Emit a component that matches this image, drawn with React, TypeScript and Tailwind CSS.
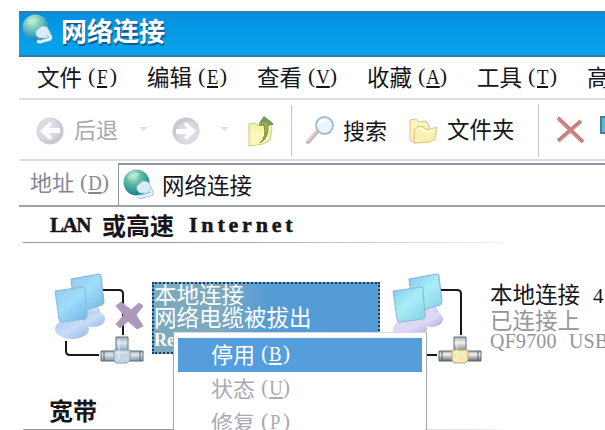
import React from 'react';

const menuItems = [
  { label: '文件', hotkey: 'F' },
  { label: '编辑', hotkey: 'E' },
  { label: '查看', hotkey: 'V' },
  { label: '收藏', hotkey: 'A' },
  { label: '工具', hotkey: 'T' },
];

const contextItems = [
  { label: '停用', hotkey: 'B', active: true },
  { label: '状态', hotkey: 'U', active: false },
  { label: '修复', hotkey: 'P', active: false },
];

const Hotkey: React.FC<{ char: string }> = ({ char }) => (
  <span className="ml-[6px] inline-flex h-[24px] font-['Liberation_Serif',serif] text-[22px] leading-[24px]">
    <span className="w-[9px]">(</span>
    <span className="flex w-[11px] justify-center">
      <span className="inline-block h-[24px] scale-x-[.85] border-b-2 border-current leading-[25px]">{char}</span>
    </span>
    <span className="w-[9px] text-right">)</span>
  </span>
);

const Globe: React.FC<{ id: string; pale?: boolean }> = ({ id, pale }) => (
  <svg width="32" height="32" viewBox="0 0 32 32" className="shrink-0">
    <defs>
      <radialGradient id={id} cx="38%" cy="25%" r="75%">
        <stop offset="0" stopColor="#c5efd9" />
        <stop offset=".4" stopColor={pale ? '#7cc9c0' : '#62bba8'} />
        <stop offset="1" stopColor={pale ? '#1783bf' : '#16818c'} />
      </radialGradient>
    </defs>
    <circle cx="13.500" cy="13.500" r="13" fill={`url(#${id})`} />
    <path d="M5 7q6-6 12-2l-5 4-6 2z" fill="#b8ecd0" opacity=".55" />
    <path d="M14 17l6-5 5 1 4 7-3 4-9 0-3-3z" fill="#d9edf6" stroke="#a4cddb" strokeWidth=".7" />
    <path d="M26 20q4 3 2 5l-10 3-3-1" fill="none" stroke="#81aec4" strokeWidth="4" />
    <path d="M26 20q4 3 2 5l-10 3-3-1" fill="none" stroke="#e5f3fa" strokeWidth="2.600" />
  </svg>
);

const Arrow: React.FC<{ id: string; forward?: boolean }> = ({ id, forward }) => (
  <svg width="28" height="28" viewBox="0 0 28 28" className={`shrink-0 ${forward ? 'rotate-180' : ''}`}>
    <defs>
      <radialGradient id={id} cx="40%" cy="40%">
        <stop offset="0" stopColor="#e2e2e9" />
        <stop offset=".8" stopColor="#d8d8e1" />
        <stop offset="1" stopColor="#c8c9d2" />
      </radialGradient>
    </defs>
    <circle cx="14" cy="14" r="13.500" fill={`url(#${id})`} />
    <path d="M4 14l10-9 2 2-3 4h11v5H13l3 5-2 2z" fill="#fff" />
  </svg>
);

const Caret: React.FC = () => (
  <svg width="9" height="4" viewBox="0 0 9 4" className="mb-[4px]">
    <path d="M0 0h9L4.500 4z" fill="#dcdce2" />
  </svg>
);

const Connection: React.FC<{ id: string; unplugged?: boolean }> = ({ id, unplugged }) => (
  <svg width="90" height="94" viewBox="0 0 90 94" className="shrink-0">
    <defs>
      <linearGradient id={`${id}-screen`} x1="0" y1="0" x2=".8" y2="1">
        <stop offset="0" stopColor={unplugged ? '#91c9ee' : '#82c6e8'} />
        <stop offset=".5" stopColor={unplugged ? '#a1dcfa' : '#a9edf8'} />
        <stop offset="1" stopColor={unplugged ? '#77bce8' : '#8ad4e8'} />
      </linearGradient>
      <linearGradient id={`${id}-base`} x1="0" y1="0" x2="1" y2="1">
        <stop offset="0" stopColor={unplugged ? '#a7c7f0' : '#d7d4f3'} />
        <stop offset=".5" stopColor={unplugged ? '#c9ddf8' : '#dedaf5'} />
        <stop offset="1" stopColor={unplugged ? '#94b6e6' : '#aaa7d8'} />
      </linearGradient>
      <linearGradient id={`${id}-plug`} x1="0" y1="0" x2="0" y2="1">
        <stop offset="0" stopColor={unplugged ? '#9aabb5' : '#a9a9a9'} />
        <stop offset=".35" stopColor={unplugged ? '#dce8ee' : '#f1f1f1'} />
        <stop offset="1" stopColor={unplugged ? '#7e95a4' : '#686868'} />
      </linearGradient>
    </defs>
    {/* cables */}
    <path d="M49 18h16q4 0 4 4v41M12 69v10q0 4 4 4h29" fill="none" stroke="#181818" strokeWidth="2" />
    {/* back monitor */}
    <path d="M31 31h12l5 14-17 2z" fill={`url(#${id}-base)`} />
    <ellipse cx="39" cy="47" rx="12" ry="8" fill={`url(#${id}-base)`} />
    <path d="M17 7L45 2q2 0 2 2l3 26q0 2-2 3l-27 8z" fill={`url(#${id}-screen)`} stroke="#86afd5" />
    {/* front monitor */}
    <path d="M12 47l13-2 7 13H5z" fill={`url(#${id}-base)`} />
    <ellipse cx="18" cy="57" rx="17" ry="10" fill={`url(#${id}-base)`} />
    <path d="M1 19l28-4q2 0 2 2l2 27q0 2-2 3L7 50q-2 0-2-3z" fill={`url(#${id}-screen)`} stroke="#8bb6d3" />
    {/* T connector */}
    <path d="M62 65h12v16H62z" fill={`url(#${id}-plug)`} stroke="#62737d" />
    <path d="M47 79h42v10H47z" fill={`url(#${id}-plug)`} stroke="#5d6d77" />
    <path d="M50 79v10M86 79v10" stroke="#52636d" />
    <path d="M60 78h16v10l-3 3H62l-2-3z" fill={unplugged ? '#c4d8e3' : '#f8e8ad'} stroke={unplugged ? '#859eae' : '#b7a779'} />
    <path d="M65 67v20M61 81h12" stroke="#fff" strokeWidth="1.500" opacity=".4" />
    {unplugged && (
      <path d="M62 34l5-4 10 8 8-7 4 3-7 9 7 11-6 3-9-8-8 7-4-4 8-9z" fill="#ae98bb" stroke="#ae9bba" />
    )}
  </svg>
);

const Toolbar: React.FC = () => (
  <div className="flex h-[61px] items-center overflow-hidden border-b-2 border-[#dcdde2] pt-[3px] whitespace-nowrap">
    <div className="ml-[17px] flex w-[136px] shrink-0 items-center text-[#a7a7ae]">
      <Arrow id="back" />
      <span className="-mt-[6px] ml-[10px] w-[65px] text-[22px]">后退</span>
      <Caret />
    </div>
    <div className="flex w-[75px] shrink-0 items-center gap-[20px]">
      <Arrow id="forward" forward />
      <Caret />
    </div>
    {/* up one level */}
    <svg width="27" height="32" viewBox="0 0 27 32" className="ml-px shrink-0">
      <path d="M1 9l6-1 3 3 11-2 3 4-2 12-7 4-14 2z" fill="#f9f3ad" stroke="#cfc580" />
      <path d="M2 15l11 2 9-6-2 14-7 4-10 1z" fill="#fdf7b8" />
      <path d="M12 28q7-6 4-18h-5l5-8 9 7-5 1q1 13-8 18z" fill="#9bb34a" stroke="#718b4a" />
      <path d="M11 8l5-7 10 8-4 1-4-3z" fill="#77995c" />
    </svg>
    <div className="ml-[16px] -mt-[2px] h-[51px] w-px shrink-0 bg-[#c3c4c9]" />
    <svg width="30" height="30" viewBox="0 0 30 30" className="-mt-[3px] ml-[13px] shrink-0">
      <path d="M3 27l11-12" stroke="#cdb5b8" strokeWidth="4" strokeLinecap="round" />
      <path d="M3 26l10-11" stroke="#e5cccd" strokeWidth="1.500" />
      <circle cx="19.500" cy="10.500" r="8.500" fill="#e6f8fe" stroke="#a4bad0" strokeWidth="1.800" />
      <path d="M14 9q2-5 8-3" fill="none" stroke="#fff" strokeWidth="2" />
    </svg>
    <span className="-mt-[4px] ml-[8px] w-[66px] shrink-0 text-[22px]">搜索</span>
    <svg width="29" height="27" viewBox="0 0 29 27" className="shrink-0">
      <path d="M1 2l6-1 3 3 7-1 3 5v14L6 25l-5-3z" fill="#fff4bc" stroke="#d6c18f" />
      <path d="M5 25V12l5-4 4 1 4 3 10-3-2 12-5 3z" fill="#fcefb0" stroke="#d6c184" />
      <path d="M7 13l4-3 6 4 8-2" fill="none" stroke="#fffbd9" strokeWidth="2" />
    </svg>
    <span className="-mt-[4px] ml-[9px] w-[91px] shrink-0 text-[22.500px]">文件夹</span>
    <div className="-mt-[2px] h-[53px] w-px shrink-0 bg-[#c3c4c9]" />
    <svg width="29" height="28" viewBox="0 0 29 28" className="-mt-[2px] ml-[17px] shrink-0">
      <path d="M2 2l25 24M25 5L2 25" stroke="#d98583" strokeWidth="4" />
      <path d="M2 1l12 11 13 14M25 5L13 14 2 24" fill="none" stroke="#9e7779" />
    </svg>
    <div className="mb-[12px] ml-[15px] h-[18px] w-[12px] shrink-0 border-2 border-[#447e9d] bg-[#5fb7d5]" />
  </div>
);

const App: React.FC = () => {
  return (
    <div className="relative h-[430px] w-[605px] overflow-hidden bg-white pl-[19px] pt-[11px] font-['Noto_Sans_CJK_SC',sans-serif] text-[#15151b]">
      {/* Title bar */}
      <div className="flex h-[46px] border-y-2 border-t-[#337caf] border-b-[#3579a3] bg-linear-to-b from-[#0790e3] to-[#06a5eb] pl-[3px] pt-px">
        <Globe id="title-globe" pale />
        <span className="ml-[7px] text-[26px] leading-[31px] font-bold text-white [text-shadow:1px_2px_1px_#16558c]">网络连接</span>
      </div>

      {/* Menu bar */}
      <div className="flex h-[43px] items-center overflow-hidden border-b-2 border-[#dedee2] pb-[4px] pl-[18px] text-[22.500px] leading-[32px] whitespace-nowrap">
        {menuItems.map((item) => (
          <div key={item.label} className="flex w-[110px] shrink-0 items-center">
            {item.label}
            <Hotkey char={item.hotkey} />
          </div>
        ))}
        <span>高</span>
      </div>

      <Toolbar />

      {/* Address bar */}
      <div className="flex h-[46px] border-b-2 border-[#9da3ad] pt-[2px]">
        <div className="flex w-[99px] items-center pb-[5px] pl-[11px] text-[22px] text-[#85878f]">
          地址
          <Hotkey char="D" />
        </div>
        <div className="flex flex-1 items-center border-t-2 border-l border-[#8e96a1] pl-[4px] text-[22.500px]">
          <Globe id="address-globe" />
          <span className="-mt-[3px] ml-[7px] leading-[30px]">网络连接</span>
        </div>
      </div>

      {/* LAN section */}
      <div className="flex h-[35px] items-center pl-[31px] text-[24px] leading-[34px] font-bold whitespace-nowrap">
        <span className="w-[52px] font-['Liberation_Serif',serif] text-[21px] tracking-[-1.500px] [-webkit-text-stroke:.5px]">LAN</span>
        <span className="w-[87px]">或高速</span>
        <span className="font-['Liberation_Serif',serif] text-[22px] tracking-[3.800px] [-webkit-text-stroke:.5px]">Internet</span>
      </div>
      <div className="ml-[4px] h-px w-[480px] bg-linear-to-r from-[#9496a0] from-30% to-[#f2f2f4]" />

      <div className="flex h-[153px] pt-[29px] pl-[35px]">
        <Connection id="lan" unplugged />
        <div className="mt-[10px] ml-[8px] h-[72px] w-[228px] shrink-0 overflow-hidden border-2 border-dotted border-[#183e68] bg-linear-to-r from-[#7ba9bd] from-30% to-[#559cd6] to-50% text-[22.500px] leading-[24px] whitespace-nowrap text-white">
          <p className="-mt-[3px]">本地连接</p>
          <p className="leading-[23px]">网络电缆被拔出</p>
          <p className="font-['Liberation_Serif',serif] text-[18px] leading-[24px] font-bold">Realtek</p>
        </div>
        <div className="ml-[12px] shrink-0">
          <Connection id="usb" />
        </div>
        <div className="mt-[9px] ml-[8px] shrink-0 text-[22.500px] leading-[24px] whitespace-nowrap">
          <p>本地连接<span className="ml-[13px] font-['Liberation_Serif',serif] text-[21px]">4</span></p>
          <p className="leading-[23px] text-[#94969d]">已连接上</p>
          <p className="font-['Liberation_Serif',serif] text-[20px] leading-[21px] tracking-[.2px] text-[#92949b] [word-spacing:7px]">QF9700 USB</p>
        </div>
      </div>

      {/* Broadband section */}
      <div className="h-[33px] pl-[30px] text-[24px] leading-[28px] font-bold">宽带</div>
      <div className="ml-[4px] h-px w-[480px] bg-linear-to-r from-[#9496a0] from-30% to-[#f2f2f4]" />

      {/* Context menu over the selected connection */}
      <div className="absolute top-[332px] left-[173px] w-[254px] border border-[#a5a5ac] border-t-[#d9dbe0] bg-white px-[4px] pt-[5px]">
        {contextItems.map((item) => (
          <div
            key={item.label}
            className={`flex h-[34px] items-center pb-[4px] pl-[33px] text-[22px] leading-[30px] ${item.active ? 'bg-[#559edb] text-white' : 'text-[#aaaab2]'}`}
          >
            {item.label}
            <Hotkey char={item.hotkey} />
          </div>
        ))}
      </div>
    </div>
  );
};

export default App;
